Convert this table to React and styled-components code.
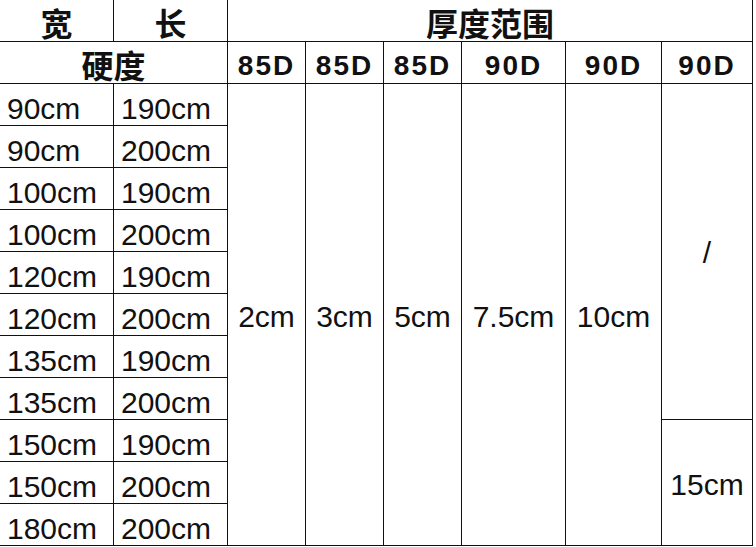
import React from "react";
import styled, { createGlobalStyle } from "styled-components";

const Global = createGlobalStyle`
  html, body { margin: 0; padding: 0; background: #fff; }
  body { font-family: "Liberation Sans", "Noto Sans CJK SC", sans-serif; color: #111; }
`;

const Table = styled.div`
  display: grid;
  grid-template-columns: 114px 114px 78px 78px 78px 104px 96px 91px;
  grid-template-rows: repeat(13, 42px);
  width: 753px;
  background: #fff;
`;

const Cell = styled.div`
  box-sizing: border-box;
  display: flex;
  align-items: center;
  justify-content: ${(p) => (p.$left ? "flex-start" : "center")};
  padding-left: ${(p) => (p.$left ? "7px" : "0")};
  padding-top: ${(p) => p.$shift || 0}px;
  border-right: 1.5px solid #111;
  border-bottom: 1.5px solid #111;
  grid-column: ${(p) => p.$col} / span ${(p) => p.$cs || 1};
  grid-row: ${(p) => p.$row} / span ${(p) => p.$rs || 1};
  font-size: ${(p) => (p.$cjk ? "32px" : p.$bold ? "28px" : "30px")};
  font-weight: ${(p) => (p.$bold ? 700 : 400)};
  letter-spacing: ${(p) => (p.$bold && !p.$cjk ? "2px" : "0")};
  white-space: nowrap;
  overflow: hidden;
`;

const hardness = ["85D", "85D", "85D", "90D", "90D", "90D"];
const sizes = [
  ["90cm", "190cm"],
  ["90cm", "200cm"],
  ["100cm", "190cm"],
  ["100cm", "200cm"],
  ["120cm", "190cm"],
  ["120cm", "200cm"],
  ["135cm", "190cm"],
  ["135cm", "200cm"],
  ["150cm", "190cm"],
  ["150cm", "200cm"],
  ["180cm", "200cm"],
];
const thick = ["2cm", "3cm", "5cm", "7.5cm", "10cm"];

export default function App() {
  return (
    <>
      <Global />
      <Table>
        <Cell $col={1} $row={1} $bold $cjk $shift={2}>宽</Cell>
        <Cell $col={2} $row={1} $bold $cjk $shift={2}>长</Cell>
        <Cell $col={3} $cs={6} $row={1} $bold $cjk $shift={2}>厚度范围</Cell>
        <Cell $col={1} $cs={2} $row={2} $bold $cjk $shift={2}>硬度</Cell>
        {hardness.map((h, i) => (
          <Cell key={i} $col={3 + i} $row={2} $bold $shift={6}>{h}</Cell>
        ))}
        {sizes.map(([w, l], i) => (
          <React.Fragment key={i}>
            <Cell $col={1} $row={3 + i} $left $shift={8}>{w}</Cell>
            <Cell $col={2} $row={3 + i} $left $shift={8}>{l}</Cell>
          </React.Fragment>
        ))}
        {thick.map((t, i) => (
          <Cell key={t} $col={3 + i} $row={3} $rs={11} $shift={5}>{t}</Cell>
        ))}
        <Cell $col={8} $row={3} $rs={8} $shift={2}>/</Cell>
        <Cell $col={8} $row={11} $rs={3} $shift={4}>15cm</Cell>
      </Table>
    </>
  );
}
